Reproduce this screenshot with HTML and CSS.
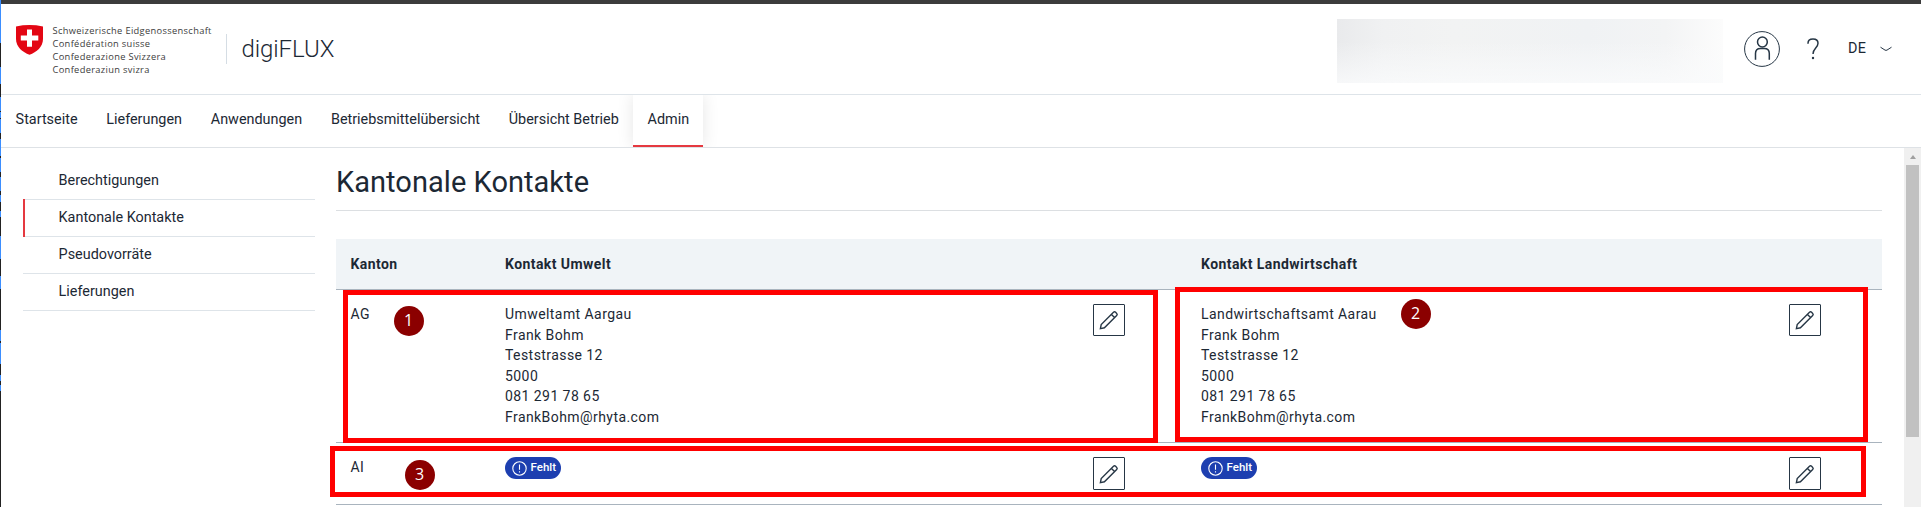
FILE: index.html
```
<!DOCTYPE html>
<html lang="de">
<head>
<meta charset="utf-8">
<title>digiFLUX – Kantonale Kontakte</title>
<link rel="stylesheet" href="styles.css">
</head>
<body>
<svg width="0" height="0" class="defs">
  <symbol id="pencil" viewBox="0 0 20 20">
    <path d="M1.400 18.600 2.200 14.600 14.500 2.300a1.500 1.500 0 0 1 2.100 0l1.100 1.100a1.500 1.500 0 0 1 0 2.100L5.400 17.800z M12.400 4.400l3.200 3.200"/>
  </symbol>
  <symbol id="alert" viewBox="0 0 15 15">
    <circle cx="7.5" cy="7.5" r="6.7"/><path d="M7.5 3.6v5.2M7.5 10.2v1.2"/>
  </symbol>
</svg>
<div class="edge"></div>
<div class="page">
  <header class="header">
    <svg class="shield" width="27" height="30" viewBox="0 0 27 30">
      <path fill="#e30613" d="M0 1.5Q13.500-1.400 27 1.500V14C27 22 20.500 27.300 13.500 29.700 6.500 27.300 0 22 0 14z"/>
      <path fill="#fff" d="M11 4.400h5v6.100h6.300v5H16v6.300h-5v-6.300H4.800v-5H11z"/>
    </svg>
    <div class="confed">Schweizerische Eidgenossenschaft<br>Confédération suisse<br>Confederazione Svizzera<br>Confederaziun svizra</div>
    <div class="brand">digiFLUX</div>
    <div class="redacted"></div>
    <svg class="user" width="36" height="36" viewBox="0 0 36 36">
      <circle cx="18" cy="18" r="17.400" stroke-width="1"/>
      <circle cx="18.400" cy="11" r="4.900"/>
      <path d="M11.500 28.800V22.500q0-5 5-5h3.800q5 0 5 5v6.300"/>
    </svg>
    <svg class="help" width="12" height="22" viewBox="0 0 12 22">
      <path d="M1 5.800V5.200C1 2.500 3 1 6 1s5 1.600 5 4.300C11 9.500 6.100 10.500 6.100 15.500v.6"/><circle class="dot" cx="6" cy="20" r="1.200"/>
    </svg>
    <span class="lang">DE</span>
    <svg class="chev" width="12" height="6" viewBox="0 0 12 6"><path d="M.5 1.200 5 4.100q1 .5 2 0L11.500 1.200"/></svg>
  </header>
  <nav class="nav">
    <a>Startseite</a><a>Lieferungen</a><a>Anwendungen</a><a>Betriebsmittelübersicht</a><a>Übersicht Betrieb</a><a class="active">Admin</a>
  </nav>
  <div class="body">
    <aside class="side">
      <a>Berechtigungen</a><a class="current">Kantonale Kontakte</a><a>Pseudovorräte</a><a>Lieferungen</a>
    </aside>
    <main class="main">
      <h1>Kantonale Kontakte</h1>
      <div class="table">
        <div class="row head"><div>Kanton</div><div>Kontakt Umwelt</div><div>Kontakt Landwirtschaft</div></div>
        <div class="row ag">
          <div>AG</div>
          <div class="contact"><p>Umweltamt Aargau<br>Frank Bohm<br>Teststrasse 12<br>5000<br>081 291 78 65<br>FrankBohm@rhyta.com</p><button class="edit"><svg><use href="#pencil"/></svg></button></div>
          <div class="contact"><p>Landwirtschaftsamt Aarau<br>Frank Bohm<br>Teststrasse 12<br>5000<br>081 291 78 65<br>FrankBohm@rhyta.com</p><button class="edit"><svg><use href="#pencil"/></svg></button></div>
        </div>
        <div class="row ai">
          <div>AI</div>
          <div class="contact"><span class="badge"><svg><use href="#alert"/></svg>Fehlt</span><button class="edit"><svg><use href="#pencil"/></svg></button></div>
          <div class="contact"><span class="badge"><svg><use href="#alert"/></svg>Fehlt</span><button class="edit"><svg><use href="#pencil"/></svg></button></div>
        </div>
      </div>
    </main>
    <div class="scroll"><i class="up"></i><div class="thumb"></div></div>
  </div>
</div>
<div class="mark m1"></div><div class="mark m2"></div><div class="mark m3"></div>
<div class="num n1">1</div><div class="num n2">2</div><div class="num n3">3</div>
</body>
</html>
```
FILE: styles.css
```
* { box-sizing: border-box; }
body { margin: 0; height: 507px; overflow: hidden; position: relative; display: flex; background: #fff; color: #1c2834; font: 14.4px/20px Roboto, sans-serif; }
.defs { position: absolute; }
svg { fill: none; stroke: #263645; flex: none; }

/* sliver of the window behind */
.edge { width: 1px; height: 507px; background: linear-gradient(#3b8eff 0 43px, #222 43px 67px, #3b8eff 67px 84px, #222 84px 97px, #3b8eff 97px 111px, #222 111px 112px, #3b8eff 112px 118px, #222 118px 119px, #3b8eff 119px 133px, #222 133px 139px, #3b8eff 139px 149px, #3b8eff 149px 156px, #222 156px 158px, #3b8eff 158px 172px, #222 172px 177px, #3b8eff 177px 191px, #222 191px 195px, #3b8eff 195px 202px, #222 202px 211px, #3b8eff 211px 217px, #222 217px 236px, #3b8eff 236px 259px, #222 259px 276px, #3b8eff 276px 289px, #222 289px 330px, #3b8eff 330px 341px, #222 341px 343px, #3b8eff 343px 364px, #222 364px 375px, #3b8eff 375px 381px, #222 381px 385px, #3b8eff 385px 391px, #222 391px); }
.page { flex: 1; min-width: 0; display: flex; flex-direction: column; border-top: 4px solid #3c3c3c; }

.header { height: 91px; flex: none; display: flex; align-items: flex-start; border-bottom: 1px solid #dee4e9; padding: 15px 29px 0 15px; }
.shield { margin-top: 5.500px; stroke: none; }
.confed { margin: 5px 0 0 9.500px; width: 173.500px; flex: none; white-space: nowrap; font: 9.3px/13px "Open Sans", "Noto Sans", sans-serif; letter-spacing: .33px; color: #3c3c3c; }
.brand { margin-top: 15px; height: 30px; border-left: 1px solid #d5dde4; padding-left: 14.500px; font-size: 24px; line-height: 30px; font-weight: 300; letter-spacing: -.08px; }
.redacted { margin-left: auto; width: 386px; height: 64px; background: linear-gradient(90deg, #e9eaec 0, #f0f1f2 12%, #f2f3f3 30%, #f0f2f4 65%, #f3f4f5 85%, #fcfcfc 100%); position: relative; }
.redacted::after { content: ""; display: block; height: 100%; background: linear-gradient(rgba(250,251,252,0) 35%, rgba(250,251,252,.8)); }
.user { margin: 12px 0 0 21px; stroke-width: 1.500; }
.help { margin: 19px 0 0 27px; stroke-width: 1.500; }
.help .dot { fill: #263645; stroke: none; }
.lang { margin: 20px 0 0 29px; line-height: 20px; width: 32px; letter-spacing: .4px; }
.chev { margin-top: 27px; }

.nav { height: 53px; flex: none; display: flex; border-bottom: 1px solid #dee2e6; overflow: hidden; }
.nav a { padding: 15px 14.380px 0; line-height: 20px; white-space: nowrap; }
.nav a:first-child { padding-left: 14.600px; }
.nav .active { border-bottom: 2px solid #e53940; box-shadow: 0 0 16px rgba(0,0,0,.1); }

.body { flex: 1; min-height: 0; display: flex; }
.side { width: 292px; margin: 15px 21px 0 22px; display: flex; flex-direction: column; }
.side a { height: 37px; border-bottom: 1px solid #dee4e9; padding: 8px 0 0 35.600px; }
.side .current { position: relative; }
.side .current::before { content: ""; position: absolute; left: 0; top: -1px; width: 2px; height: 38px; background: #e53940; }

.main { width: 1546px; flex: none; }
h1 { margin: 0; height: 63px; border-bottom: 1px solid #dcdfe2; padding-top: 16px; font-size: 29px; line-height: 36px; font-weight: 400; letter-spacing: .04px; }
.table { margin-top: 28px; font-size: 14px; letter-spacing: .43px; line-height: 20.600px; }
.row { display: grid; grid-template-columns: 154.500px 696px 1fr; padding-left: 14.500px; border-bottom: 1px solid #a9b4be; }
.head { height: 51px; background: #f0f4f7; font-weight: 700; padding-top: 15px; }
.ag { height: 153px; padding-top: 14px; }
.ai { height: 62px; padding-top: 14px; }
.contact { display: flex; align-items: flex-start; width: 620px; justify-content: space-between; }
.contact p { margin: 0; }
.edit { width: 32px; height: 32px; border: 1px solid #263645; border-radius: 1px; background: #fff; padding: 0; display: flex; align-items: center; justify-content: center; }
.ai .edit { height: 33px; }
.edit svg { width: 20px; height: 20px; stroke-width: 1.400; }
.badge { width: 56px; height: 22px; border-radius: 11px; background: #1d3fb0; color: #fff; display: flex; align-items: center; gap: 3.500px; padding: 0 0 1px 7px; font-size: 11.5px; font-weight: 500; letter-spacing: 0; }
.badge svg { width: 15px; height: 15px; stroke: #fff; stroke-width: 1.100; position: relative; top: .5px; }

.scroll { width: 17px; margin-left: auto; background: #f0f0f0; padding: 7px 2px 0; }
.up { display: block; margin: 0 auto; width: 0; border: 3px solid transparent; border-top: 0; border-bottom: 4px solid #a0a0a0; }
.thumb { margin-top: 6px; height: 272px; background: #c1c1c1; }

/* annotations laid over the page */
.mark { position: absolute; border: 5px solid #f00; }
.m1 { left: 343px; top: 290px; width: 815px; height: 153px; }
.m2 { left: 1175px; top: 287px; width: 693px; height: 155px; }
.m3 { left: 330px; top: 446px; width: 1536px; height: 51px; }
.num { position: absolute; width: 30px; height: 30px; border-radius: 50%; background: #8b0000; color: #fff; text-align: center; font: 16px/29px "Open Sans", sans-serif; }
.n1 { left: 393.500px; top: 305.500px; }
.n2 { left: 1400.500px; top: 298.500px; }
.n3 { left: 404.500px; top: 459.500px; }
```
